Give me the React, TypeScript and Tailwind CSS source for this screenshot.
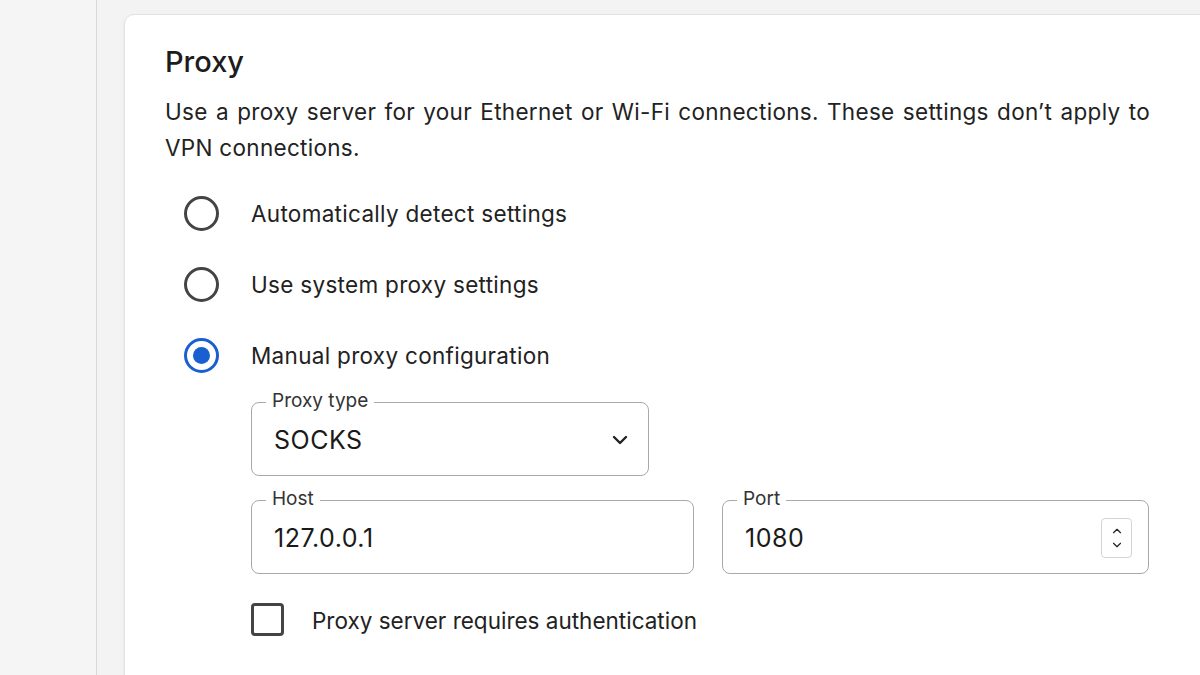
import { ChevronDown, ChevronUp } from "lucide-react";

const radioOptions = [
  { label: "Automatically detect settings", checked: false },
  { label: "Use system proxy settings", checked: false },
  { label: "Manual proxy configuration", checked: true },
];

function Radio({ checked }: { checked: boolean }) {
  if (checked) {
    return (
      <span className="flex h-[35px] w-[35px] shrink-0 items-center justify-center rounded-full border-[3px] border-[#1a5fd0]">
        <span className="h-[17px] w-[17px] rounded-full bg-[#1a5fd0]" />
      </span>
    );
  }
  return <span className="h-[35px] w-[35px] shrink-0 rounded-full border-[3px] border-[#444]" />;
}

function Field({
  label,
  value,
  className,
  trailing,
}: {
  label: string;
  value: string;
  className: string;
  trailing?: React.ReactNode;
}) {
  return (
    <div
      className={`relative flex h-[74px] items-center rounded-[8px] border-[1.5px] border-[#a9a9a9] pl-[22px] pr-[16px] ${className}`}
    >
      <span className="absolute left-[14px] top-[-15px] bg-white px-[6px] text-[19px] leading-[26px] text-[#333]">
        {label}
      </span>
      <span className="mt-[4px] flex-1 text-[25px] tracking-[0.5px] text-[#1a1a1a]">{value}</span>
      {trailing}
    </div>
  );
}

export default function App() {
  return (
    <div className="flex h-[675px] w-[1200px] overflow-hidden bg-[#f3f3f3] font-['Inter',sans-serif] text-[#222]">
      <aside className="w-[97px] shrink-0 border-r-[1.5px] border-[#d8d8d8] bg-[#f5f5f5]" />
      <div className="flex-1 pl-[27px] pt-[14px]">
        <section className="h-[700px] w-[1120px] rounded-tl-[10px] border border-[#e2e2e2] bg-white pl-[40px] pt-[29px] shadow-[0_1px_3px_rgba(0,0,0,0.06)]">
          <h2 className="text-[29px] font-medium leading-[36px] text-[#1c1c1c]">Proxy</h2>
          <p className="mt-[14px] w-[985px] text-justify text-[22.5px] leading-[36px] tracking-[0.3px] text-[#222]">
            Use a proxy server for your Ethernet or Wi-Fi connections. These settings don’t apply to VPN connections.
          </p>

          <div className="mt-[30px] flex flex-col gap-[36px] pl-[19px]">
            {radioOptions.map((opt) => (
              <label key={opt.label} className="flex h-[35px] items-center gap-[32px]">
                <Radio checked={opt.checked} />
                <span className="text-[22.5px] tracking-[0.3px] text-[#222]">{opt.label}</span>
              </label>
            ))}
          </div>

          <div className="ml-[86px] mt-[29px] flex flex-col gap-[24px]">
            <Field
              label="Proxy type"
              value="SOCKS"
              className="w-[398px]"
              trailing={<ChevronDown className="mt-[2px] h-[24px] w-[24px] text-[#222]" strokeWidth={2.4} />}
            />
            <div className="flex gap-[28px]">
              <Field label="Host" value="127.0.0.1" className="w-[443px]" />
              <Field
                label="Port"
                value="1080"
                className="w-[427px]"
                trailing={
                  <span className="mt-[2px] flex h-[40px] w-[31px] flex-col items-center justify-center rounded-[4px] border border-[#d4d4d4]">
                    <ChevronUp className="h-[14px] w-[14px]" strokeWidth={2} />
                    <ChevronDown className="h-[14px] w-[14px]" strokeWidth={2} />
                  </span>
                }
              />
            </div>
            <label className="mt-[3px] flex items-center gap-[28px]">
              <span className="h-[33px] w-[33px] shrink-0 rounded-[4px] border-[3px] border-[#444]" />
              <span className="mt-[3px] text-[22.5px] text-[#222]">Proxy server requires authentication</span>
            </label>
          </div>
        </section>
      </div>
    </div>
  );
}
